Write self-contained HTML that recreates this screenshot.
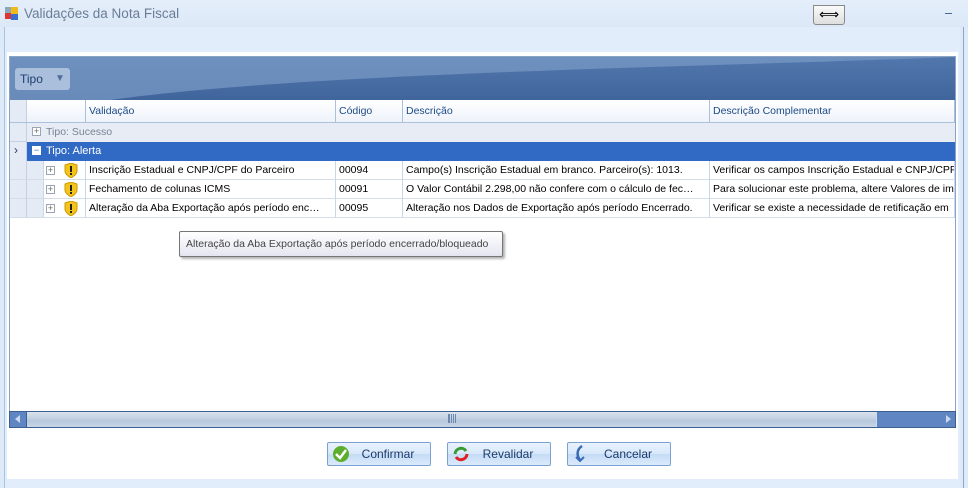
<!DOCTYPE html>
<html><head><meta charset="utf-8"><style>
*{margin:0;padding:0;box-sizing:border-box}
body{width:968px;height:488px;overflow:hidden;background:#dfeaf8;font-family:"Liberation Sans","DejaVu Sans",sans-serif;font-size:10.5px;color:#000;position:relative}
.abs{position:absolute}
.title{left:0;top:0;width:968px;height:28px;background:linear-gradient(#e4eefb,#dce8f7)}
.title span{position:absolute;left:24px;top:6px;font-size:13.5px;color:#6a7d96}
.client{left:4px;top:27px;width:956px;height:461px;background:#e1edfb;border-left:1px solid #a9c3e3}
.panel{left:7px;top:52px;width:951px;height:427px;background:#fff}
.grid{left:9px;top:56px;width:947px;height:370px;border:1px solid #8ba3c4;background:#fff}
.band{left:10px;top:57px;width:945px;height:43px;background:linear-gradient(#5177ad,#3f659c);overflow:hidden}
.cell{position:absolute;height:100%;border-right:1px solid #c9d7ea;padding-left:3px;white-space:nowrap;overflow:hidden}
.row{position:absolute;left:10px;width:945px;height:19px;line-height:18px}
.hdr{top:100px;height:23px;line-height:22px;background:linear-gradient(#fff,#eef3fa);border-bottom:1px solid #aac0dc;color:#1c4a86}
.hdr .cell{border-right:1px solid #aac0dc}
.dr .cell{border-bottom:1px solid #d4dde9}
.ind{background:#e4ebf5;border-right:1px solid #c3d0e3!important}
.warn{position:absolute;left:64px;width:14px;height:15px}
.plus{position:absolute;width:9px;height:9px;border:1px solid #9aa6b6;background:#fff;font-size:9px;line-height:7px;text-align:center;color:#666}
.btn{position:absolute;top:442px;width:104px;height:24px;border:1px solid #7aa1d2;border-radius:2px;background:linear-gradient(#eaf3fd,#d7e7fa 50%,#c4dbf5 51%,#dbeafc);color:#1b3b6b;font-size:12px;line-height:22px;text-align:center;padding-left:18px}
.btn svg{position:absolute;left:4px;top:2px}
</style></head><body>
<div class="abs title"><svg class="abs" style="left:5px;top:7px" width="14" height="14"><rect x="0" y="6" width="6" height="6" fill="#d33"/><rect x="6" y="0" width="7" height="7" fill="#f0b818"/><rect x="6" y="7" width="7" height="6" fill="#3a6fd0"/><rect x="0" y="0" width="6" height="6" fill="#8ab"/></svg><span>Validações da Nota Fiscal</span>
<div class="abs" style="left:813px;top:5px;width:32px;height:20px;border:1px solid #8a8a8a;border-radius:0 0 3px 3px;background:linear-gradient(#fafafa,#dedede);text-align:center;font-size:14px;line-height:17px">⟺</div>
<div class="abs" style="left:945px;top:13px;width:7px;height:1px;background:#4c6a90"></div></div>
<div class="abs client"></div>
<div class="abs panel"></div>
<div class="abs grid"></div>
<div class="abs band"><svg width="945" height="43" class="abs" style="left:0;top:0"><path d="M0 0 H945 V0 C700 10 300 15 100 43 H0Z" fill="#7b9bc6" opacity=".7"/></svg>
<div class="abs" style="left:5px;top:11px;width:55px;height:22px;border-radius:3px;background:#a9bfdc;color:#1e3f70;font-size:12px;line-height:22px;padding-left:5px">Tipo <span style="position:absolute;left:40px;color:#4f6e9a;font-size:10px">▼</span></div></div>
<div class="row hdr"><div class="cell ind" style="left:0;width:17px"></div><div class="cell" style="left:17px;width:59px"></div><div class="cell" style="left:76px;width:250px">Validação</div><div class="cell" style="left:326px;width:67px">Código</div><div class="cell" style="left:393px;width:307px">Descrição</div><div class="cell" style="left:700px;width:245px">Descrição Complementar</div></div>
<div class="row" style="top:123px;background:#e7ecf5;color:#7a8494"><div class="cell ind" style="left:0;width:17px;border-bottom:1px solid #c3d0e3"></div><div class="plus" style="left:22px;top:4px">+</div><span style="position:absolute;left:36px">Tipo: Sucesso</span></div>
<div class="row" style="top:142px;background:#316ac5;color:#fff"><div class="cell ind" style="left:0;width:17px;color:#336;font-size:12px;line-height:17px;padding-left:4px">›</div><div class="plus" style="left:22px;top:4px;border-color:#fff;background:#fff;color:#316ac5">−</div><span style="position:absolute;left:36px;font-size:11px">Tipo: Alerta</span></div>
<div class="row dr" style="top:161px"><div class="cell ind" style="left:0;width:17px"></div><div class="cell" style="left:17px;width:17px;background:#e4ebf5"></div><div class="cell" style="left:34px;width:42px"></div><div class="cell" style="left:76px;width:250px">Inscrição Estadual e CNPJ/CPF do Parceiro</div><div class="cell" style="left:326px;width:67px">00094</div><div class="cell" style="left:393px;width:307px">Campo(s) Inscrição Estadual em branco. Parceiro(s): 1013.</div><div class="cell" style="left:700px;width:245px">Verificar os campos Inscrição Estadual e CNPJ/CPF</div></div>
<div class="row dr" style="top:180px"><div class="cell ind" style="left:0;width:17px"></div><div class="cell" style="left:17px;width:17px;background:#e4ebf5"></div><div class="cell" style="left:34px;width:42px"></div><div class="cell" style="left:76px;width:250px">Fechamento de colunas ICMS</div><div class="cell" style="left:326px;width:67px">00091</div><div class="cell" style="left:393px;width:307px">O Valor Contábil 2.298,00 não confere com o cálculo de fec…</div><div class="cell" style="left:700px;width:245px">Para solucionar este problema, altere Valores de im</div></div>
<div class="row dr" style="top:199px"><div class="cell ind" style="left:0;width:17px"></div><div class="cell" style="left:17px;width:17px;background:#e4ebf5"></div><div class="cell" style="left:34px;width:42px"></div><div class="cell" style="left:76px;width:250px">Alteração da Aba Exportação após período enc…</div><div class="cell" style="left:326px;width:67px">00095</div><div class="cell" style="left:393px;width:307px">Alteração nos Dados de Exportação após período Encerrado.</div><div class="cell" style="left:700px;width:245px">Verificar se existe a necessidade de retificação em</div></div>
<div class="plus" style="left:46px;top:166px">+</div><div class="plus" style="left:46px;top:185px">+</div><div class="plus" style="left:46px;top:204px">+</div>
<svg class="warn" style="top:163px" viewBox="0 0 14 15"><path d="M1 2 L7 0 L13 2 V8 C13 11 10 13 7 15 C4 13 1 11 1 8Z" fill="#f4c419" stroke="#c79a0a"/><rect x="6" y="3" width="2" height="6" fill="#222"/><rect x="6" y="10" width="2" height="2" fill="#222"/></svg>
<svg class="warn" style="top:182px" viewBox="0 0 14 15"><path d="M1 2 L7 0 L13 2 V8 C13 11 10 13 7 15 C4 13 1 11 1 8Z" fill="#f4c419" stroke="#c79a0a"/><rect x="6" y="3" width="2" height="6" fill="#222"/><rect x="6" y="10" width="2" height="2" fill="#222"/></svg>
<svg class="warn" style="top:201px" viewBox="0 0 14 15"><path d="M1 2 L7 0 L13 2 V8 C13 11 10 13 7 15 C4 13 1 11 1 8Z" fill="#f4c419" stroke="#c79a0a"/><rect x="6" y="3" width="2" height="6" fill="#222"/><rect x="6" y="10" width="2" height="2" fill="#222"/></svg>
<div class="abs" style="left:179px;top:231px;width:324px;height:26px;border:1px solid #767676;border-radius:2px;background:linear-gradient(#fff,#e4e5f0);box-shadow:2px 2px 2px rgba(0,0,0,.3);font-size:10.5px;line-height:24px;padding-left:6px;color:#444;white-space:nowrap;overflow:hidden">Alteração da Aba Exportação após período encerrado/bloqueado</div>
<div class="abs" style="left:9px;top:411px;width:947px;height:17px;border:1px solid #3b5f90;background:linear-gradient(#dbe3ee,#b7c8dd 60%,#c8d5e6)"></div>
<div class="abs" style="left:10px;top:412px;width:17px;height:15px;background:#5f86c2;border-right:1px solid #3b5f90"><div class="abs" style="left:5px;top:3px;border-right:5px solid #c9d9ef;border-top:4px solid transparent;border-bottom:4px solid transparent"></div></div>
<div class="abs" style="left:876px;top:412px;width:79px;height:15px;background:#5f86c2;border-left:1px solid #cfdaea"><div class="abs" style="left:69px;top:3px;border-left:5px solid #c9d9ef;border-top:4px solid transparent;border-bottom:4px solid transparent"></div></div>
<div class="abs" style="left:448px;top:414px;width:8px;height:9px;border-left:1px solid #6d87ad;border-right:1px solid #6d87ad;background:repeating-linear-gradient(90deg,#6d87ad 0 1px,transparent 1px 2px)"></div>
<div class="btn" style="left:327px"><svg width="18" height="18"><circle cx="9" cy="9" r="8" fill="#5cae2c"/><path d="M4 9 L8 13 L14 5" stroke="#fff" stroke-width="2.5" fill="none"/></svg>Confirmar</div>
<div class="btn" style="left:447px"><svg width="18" height="18"><path d="M3 9 A6 6 0 0 1 14 6" stroke="#3b9b32" stroke-width="3" fill="none"/><path d="M15 9 A6 6 0 0 1 4 12" stroke="#d22" stroke-width="3" fill="none"/></svg>Revalidar</div>
<div class="btn" style="left:567px"><svg width="18" height="18"><path d="M10 1 C4 5 5 11 8 15" stroke="#3a6bb4" stroke-width="2.5" fill="none"/><path d="M4 12 L8 16 L12 12" stroke="#3a6bb4" stroke-width="2" fill="none"/></svg>Cancelar</div>
<div class="abs" style="left:963px;top:27px;width:1px;height:461px;background:#8aa8cf"></div>
</body></html>
